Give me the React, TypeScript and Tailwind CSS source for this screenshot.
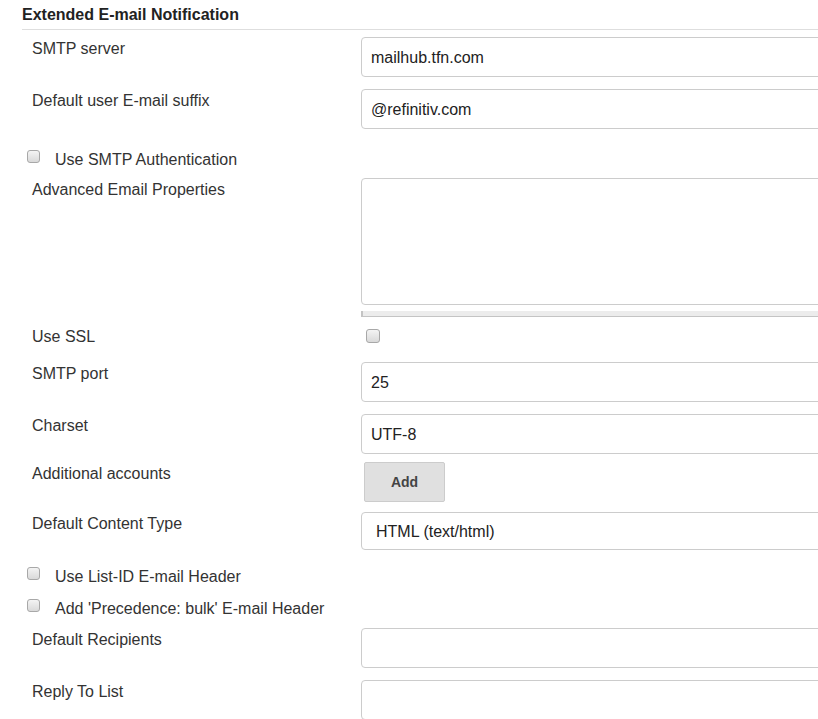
import React from "react";

const font = { fontFamily: '"Liberation Sans", Arial, sans-serif' };

function Checkbox({ className = "" }: { className?: string }) {
    return (
        <span
            className={`block w-[13px] h-[13px] shrink-0 rounded-[3px] border border-[#a8a8a8] bg-linear-to-b from-[#f4f4f4] to-[#d9d9d9] ${className}`}
        />
    );
}

function TextField({ value = "", className = "" }: { value?: string; className?: string }) {
    return (
        <input
            type="text"
            readOnly
            value={value}
            className={`block w-[520px] h-[40px] border border-[#ccc] rounded-[4px] bg-white px-[9px] pt-[2px] text-[16px] text-[#222] outline-none ${className}`}
        />
    );
}

function FieldRow({ label, children, className = "" }: { label: string; children: React.ReactNode; className?: string }) {
    return (
        <div className={`flex ${className}`}>
            <div className="w-[361px] shrink-0 pl-[32px] pt-[3px] leading-[18px] text-[16px] text-[#333]">{label}</div>
            <div className="shrink-0">{children}</div>
        </div>
    );
}

function CheckRow({ label, className = "" }: { label: string; className?: string }) {
    return (
        <div className={`flex items-start h-[18px] pl-[27px] leading-[18px] text-[16px] text-[#333] ${className}`}>
            <Checkbox />
            <span className="ml-[15px] mt-[1px]">{label}</span>
        </div>
    );
}

export default function App() {
    return (
        <div className="w-[818px] h-[719px] overflow-hidden bg-white" style={font}>
            <div className="ml-[22px] pt-[6px] pb-[5px] border-b border-[#dedede] leading-[18px] text-[16px] font-bold text-[#222]">
                Extended E-mail Notification
            </div>

            <FieldRow label="SMTP server" className="mt-[7px]">
                <TextField value="mailhub.tfn.com" />
            </FieldRow>

            <FieldRow label="Default user E-mail suffix" className="mt-[12px]">
                <TextField value="@refinitiv.com" />
            </FieldRow>

            <CheckRow label="Use SMTP Authentication" className="mt-[21px]" />

            <FieldRow label="Advanced Email Properties" className="mt-[10px]">
                <textarea
                    readOnly
                    className="block w-[520px] h-[127px] border border-[#ccc] rounded-[4px] bg-white resize-none outline-none"
                />
                <div className="mt-[6px] w-[520px] h-[6px] bg-[#ececec] border-l-2 border-b border-[#c4c4c4]" />
            </FieldRow>

            <div className="flex h-[18px] mt-[10px] leading-[18px] text-[16px] text-[#333]">
                <div className="w-[361px] shrink-0 pl-[32px] mt-[1px]">Use SSL</div>
                <Checkbox className="mt-[2px] ml-[5px] w-[14px] h-[14px]" />
            </div>

            <FieldRow label="SMTP port" className="mt-[17px]">
                <TextField value="25" />
            </FieldRow>

            <FieldRow label="Charset" className="mt-[12px]">
                <TextField value="UTF-8" />
            </FieldRow>

            <FieldRow label="Additional accounts" className="mt-[8px]">
                <button
                    type="button"
                    className="block ml-[3px] w-[81px] h-[40px] border border-[#ccc] rounded-[2px] bg-[#e0e0e0] text-[14px] font-bold text-[#444]"
                >
                    Add
                </button>
            </FieldRow>

            <FieldRow label="Default Content Type" className="mt-[10px]">
                <div className="w-[520px] h-[38px] border border-[#ccc] rounded-[4px] bg-white pl-[14px] pt-[2px] flex items-center text-[16px] text-[#222]">
                    HTML (text/html)
                </div>
            </FieldRow>

            <CheckRow label="Use List-ID E-mail Header" className="mt-[17px]" />
            <CheckRow label="Add 'Precedence: bulk' E-mail Header" className="mt-[14px]" />

            <FieldRow label="Default Recipients" className="mt-[11px]">
                <TextField />
            </FieldRow>

            <FieldRow label="Reply To List" className="mt-[12px]">
                <TextField />
            </FieldRow>
        </div>
    );
}
